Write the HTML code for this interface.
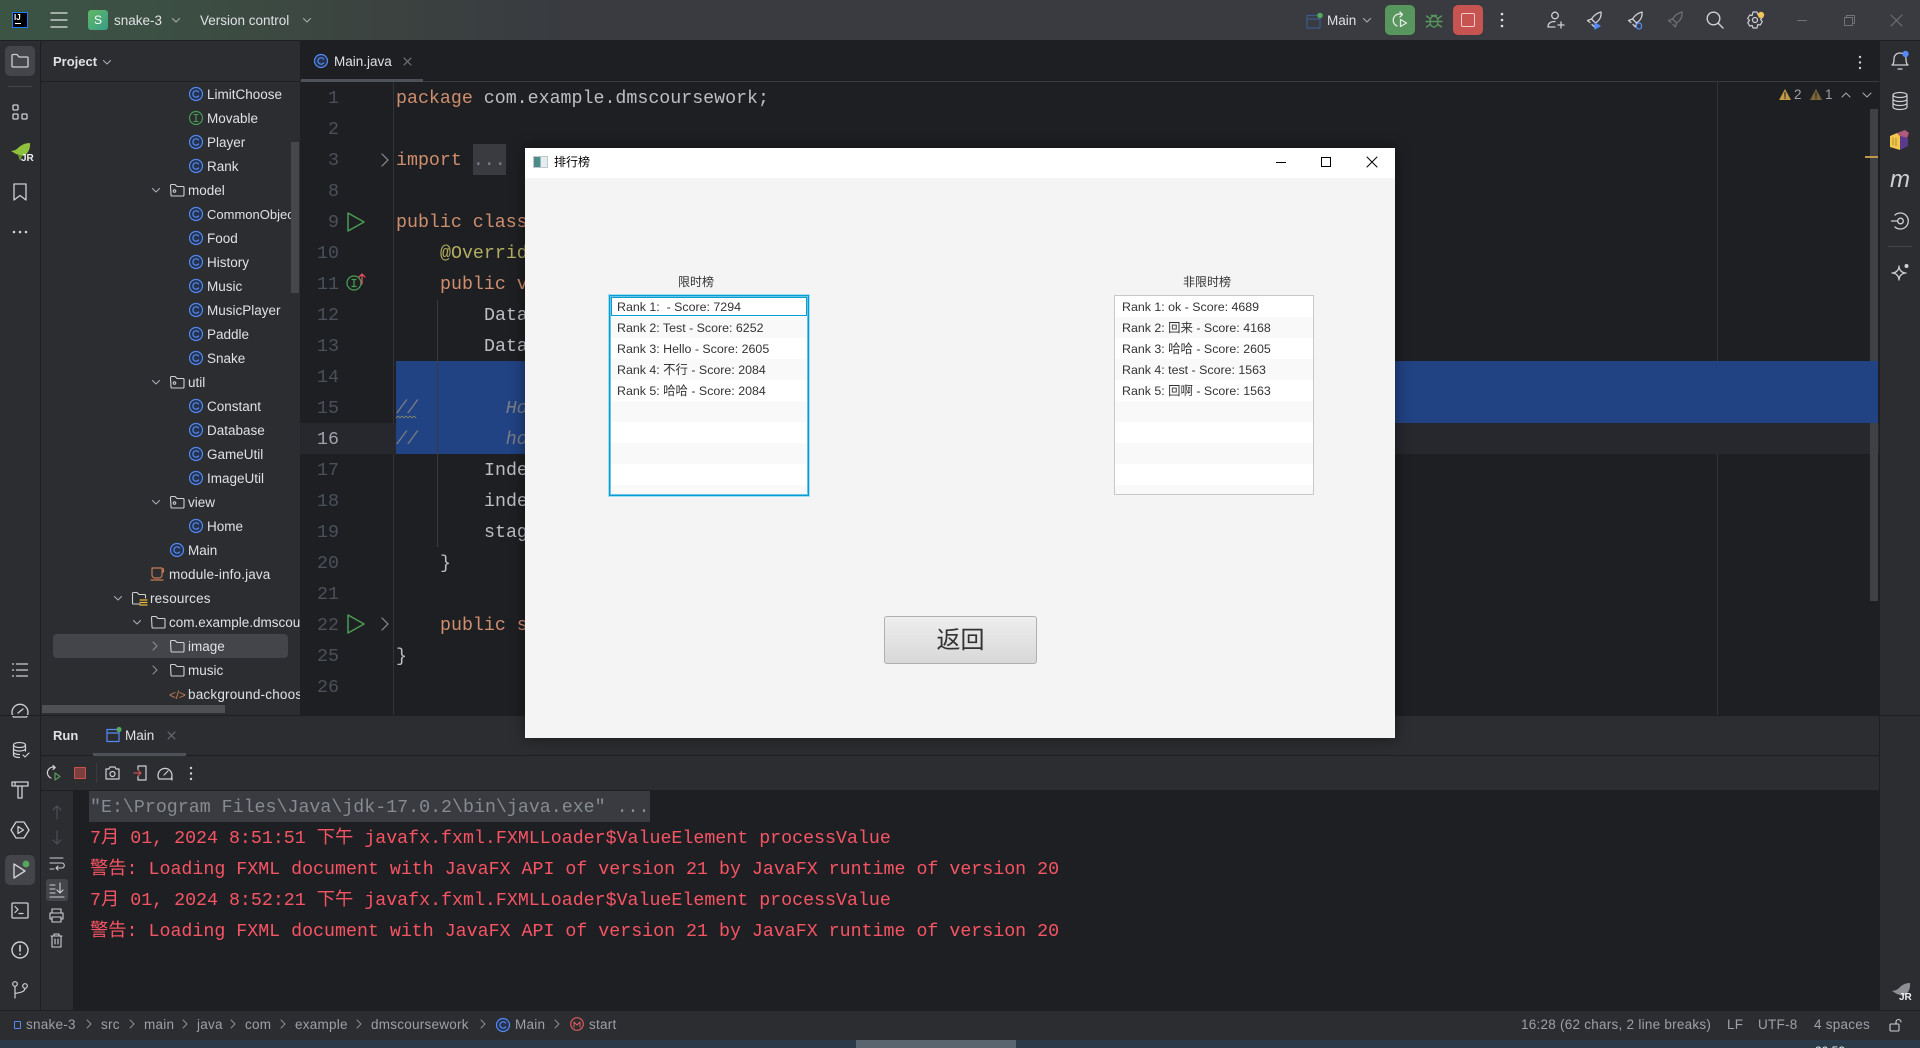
<!DOCTYPE html>
<html><head><meta charset="utf-8"><style>
html,body{margin:0;padding:0;background:#1e1f22;width:1920px;height:1048px;overflow:hidden}
body{position:relative;font-family:"Liberation Sans","Noto Sans CJK SC",sans-serif;font-size:13.5px;color:#dfe1e5}
.a{position:absolute}
.t{position:absolute;white-space:pre;line-height:24px;height:24px;padding-top:1px}
svg{position:absolute;overflow:visible;fill:none;stroke-linecap:round;stroke-linejoin:round}
.m{position:absolute;white-space:pre;font-family:"Liberation Mono","Noto Sans CJK SC",monospace;font-size:18.3px;line-height:31px;height:31px;margin-top:2px}
.n{position:absolute;left:300px;width:39px;text-align:right;font-family:"Liberation Mono",monospace;font-size:18.3px;line-height:31px;color:#4b5059;margin-top:2px}
.k{color:#cf8e6d}.w{color:#bcbec4}.g{color:#7a7e85}
.r{color:#f75464}.rl{position:absolute;left:90px;white-space:pre;font-family:"Liberation Mono","Noto Sans CJK SC",monospace;font-size:18.3px;line-height:31px;color:#f75464;margin-top:1px}
.d{position:absolute;white-space:pre;font-family:"Liberation Sans","Noto Sans CJK SC",sans-serif;font-size:12.4px;line-height:21px;color:#333;margin-top:1px}
.s{position:absolute;top:1012px;line-height:25px;white-space:pre;color:#9da0a8;font-size:13.5px;letter-spacing:.25px}
</style></head><body>
<svg width="0" height="0" style="position:absolute"><defs>
<symbol id="c" viewBox="0 0 16 16" overflow="visible"><circle cx="8" cy="8" r="6.5" stroke="#548af7" stroke-width="1.2" fill="#25324d"/><path d="M10.6 6A3.2 3.2 0 1 0 10.6 10" stroke="#548af7" stroke-width="1.2" fill="none"/></symbol>
<symbol id="f" viewBox="0 0 16 16" overflow="visible"><path d="M1.5 3.5a1 1 0 0 1 1-1h3.5l2 2h6a1 1 0 0 1 1 1v7.500a1 1 0 0 1-1 1h-11a1 1 0 0 1-1-1z" stroke="#ced0d6" stroke-width="1.1" fill="none"/></symbol>
<symbol id="fp" viewBox="0 0 16 16" overflow="visible"><path d="M1.500 3.500a1 1 0 0 1 1-1h3.500l2 2h6a1 1 0 0 1 1 1v7.500a1 1 0 0 1-1 1h-11a1 1 0 0 1-1-1z" stroke="#ced0d6" stroke-width="1.1" fill="none"/><circle cx="5.500" cy="9" r="1.300" stroke="#ced0d6"/></symbol>
<symbol id="dn" viewBox="0 0 10 10" overflow="visible"><path d="M1.500 3.500l3.500 3.500 3.500-3.500" stroke="#a8abb2" stroke-width="1.1" fill="none"/></symbol>
<symbol id="rt" viewBox="0 0 10 10" overflow="visible"><path d="M3 1l4 4-4 4" stroke="#8c8f96" stroke-width="1.1" fill="none"/></symbol>
<symbol id="rk" viewBox="0 0 20 20" overflow="visible"><path d="M17 2c.5 4-1 8-5.500 11L7.500 9C10 5 13 3 17 2zM7.500 9l-4 1.500L6 12.500M11.500 13l-1 4-2.500-2.500" stroke="#ced0d6" stroke-width="1.3" fill="none"/></symbol>
<symbol id="sep" viewBox="0 0 10 10" overflow="visible"><path d="M3 1l4 4-4 4" stroke="#8c8f96" stroke-width="1" fill="none"/></symbol>
</defs></svg>

<!-- title bar -->
<div class="a" style="left:0;top:0;width:1920px;height:40px;background:#393b40"></div>
<div class="a" style="left:0;top:0;width:560px;height:40px;background:linear-gradient(90deg,#3b5444 0,#3c4f44 30%,#3b423f 70%,#393b40 100%)"></div>
<div class="a" style="left:0;top:40px;width:1920px;height:1px;background:#1e1f22"></div>
<div class="a" style="left:12px;top:12px;width:14px;height:14px;background:#000;border:1px solid #1f7bff"></div>
<div class="a" style="left:14px;top:13px;color:#fff;font-size:8px;font-weight:bold;line-height:10px">IJ</div>
<div class="a" style="left:15px;top:23px;width:6px;height:1px;background:#fff"></div>
<svg style="left:51px;top:12px" width="16" height="16"><path d="M0 1h16M0 8h16M0 15h16" stroke="#dfe1e5" stroke-width="1.300"/></svg>
<div class="a" style="left:88px;top:10px;width:20px;height:20px;border-radius:3px;background:linear-gradient(135deg,#5fb863,#3a9c8a);color:#fff;font-size:12px;line-height:20px;text-align:center">S</div>
<div class="t" style="left:114px;top:8px">snake-3</div>
<svg style="left:171px;top:15px" width="10" height="10"><use href="#dn" width="10" height="10"/></svg>
<div class="t" style="left:200px;top:8px">Version control</div>
<svg style="left:302px;top:15px" width="10" height="10"><use href="#dn" width="10" height="10"/></svg>

<svg style="left:1306px;top:13px" width="16" height="16"><path d="M1 2.500h13v12.500h-13zM1 6h13" stroke="#3a5a8c" stroke-width="1.200"/><circle cx="14" cy="2.500" r="2.800" fill="#57a65e"/></svg>
<div class="t" style="left:1327px;top:8px">Main</div>
<svg style="left:1362px;top:15px" width="10" height="10"><use href="#dn" width="10" height="10"/></svg>
<div class="a" style="left:1385px;top:5px;width:30px;height:30px;border-radius:5px;background:#57965c"></div>
<svg style="left:1391px;top:11px" width="18" height="18"><path d="M11 3.500A6 6 0 1 0 6 15M9 1l2.500 2.500L9 6" stroke="#e6e6e6" stroke-width="1.300"/><path d="M9.500 8.500v7l6-3.500z" stroke="#e6e6e6" stroke-width="1.300"/></svg>
<svg style="left:1426px;top:12px" width="16" height="16"><ellipse cx="8" cy="9.500" rx="4" ry="5.500" stroke="#57965c" stroke-width="1.400"/><path d="M0.500 4l3.500 2.500M15.500 4l-3.500 2.500M0 9.500h4M16 9.500h-4M0.500 15l3.500-2.500M15.500 15l-3.500-2.500M5.500 3.500h5M4 9.500h8" stroke="#57965c" stroke-width="1.400"/></svg>
<div class="a" style="left:1453px;top:5px;width:30px;height:30px;border-radius:5px;background:#c75450"></div>
<div class="a" style="left:1461px;top:13px;width:12px;height:12px;border:1.500px solid #eeccc9;border-radius:2px"></div>
<svg style="left:1500px;top:12px" width="4" height="16"><circle cx="2" cy="2" r="1.300" fill="#dfe1e5"/><circle cx="2" cy="8" r="1.300" fill="#dfe1e5"/><circle cx="2" cy="14" r="1.300" fill="#dfe1e5"/></svg>
<svg style="left:1547px;top:11px" width="18" height="18"><circle cx="8" cy="4.500" r="3.300" stroke="#ced0d6" stroke-width="1.300"/><path d="M1 16c0-3.500 2.500-5.500 7-5.500M8 16H1M14 11v6M11 14h6" stroke="#ced0d6" stroke-width="1.300"/></svg>
<svg style="left:1584px;top:10px" width="20" height="20"><use href="#rk" width="20" height="20"/><path d="M11 13v6l5-3z" stroke="#548af7" stroke-width="1.300" fill="#548af7"/></svg>
<svg style="left:1625px;top:10px" width="20" height="20"><use href="#rk" width="20" height="20"/><rect x="11.500" y="13" width="5" height="6" rx="2.500" stroke="#548af7" stroke-width="1.300"/></svg>
<svg style="left:1665px;top:10px;opacity:.35" width="20" height="20"><use href="#rk" width="20" height="20"/></svg>
<svg style="left:1706px;top:11px" width="18" height="18"><circle cx="7.500" cy="7.500" r="6.300" stroke="#ced0d6" stroke-width="1.400"/><path d="M12 12l5 5" stroke="#ced0d6" stroke-width="1.400"/></svg>
<svg style="left:1746px;top:11px" width="18" height="18"><path d="M7 1h4l.8 2.500 2.500-.5 2 3.500-1.800 2 1.800 2-2 3.500-2.500-.5L11 17H7l-.8-2.500-2.500.5-2-3.500 1.800-2-1.800-2 2-3.500 2.500.5z" stroke="#ced0d6" stroke-width="1.200"/><circle cx="9" cy="9" r="2.500" stroke="#ced0d6" stroke-width="1.200"/><circle cx="15" cy="4" r="3.200" fill="#f2c55c"/></svg>
<div class="a" style="left:1797px;top:20px;width:10px;height:1px;background:#6f7278"></div>
<svg style="left:1844px;top:15px" width="11" height="11"><path d="M0.500 2.500h8v8h-8zM2.500 2.500V.5h8v8h-2" stroke="#6f7278"/></svg>
<svg style="left:1891px;top:15px" width="11" height="11"><path d="M0 0l11 11M11 0L0 11" stroke="#6f7278"/></svg>

<!-- left strip -->
<div class="a" style="left:0;top:41px;width:40px;height:969px;background:#2b2d30"></div>
<div class="a" style="left:40px;top:41px;width:1px;height:969px;background:#1e1f22"></div>
<div class="a" style="left:5px;top:46px;width:30px;height:30px;border-radius:5px;background:#43454a"></div>
<svg style="left:11px;top:53px" width="18" height="16"><path d="M1 2.500a1 1 0 0 1 1-1h4l2 2.500h8a1 1 0 0 1 1 1v8a1 1 0 0 1-1 1H2a1 1 0 0 1-1-1z" stroke="#ced0d6" stroke-width="1.300"/></svg>
<div class="a" style="left:8px;top:86px;width:24px;height:1px;background:#43454a"></div>
<svg style="left:12px;top:104px" width="16" height="16"><rect x="1" y="1" width="5" height="5" rx="1" stroke="#ced0d6" stroke-width="1.300"/><rect x="1" y="10" width="5" height="5" rx="1" stroke="#ced0d6" stroke-width="1.300"/><rect x="10" y="10" width="5" height="5" rx="1" stroke="#ced0d6" stroke-width="1.300"/></svg>
<svg style="left:10px;top:142px" width="22" height="22"><path d="M20 1c.5 6-2 11-7 13l-4-1-3-1-5-3c3-.5 5-1 7-3 3-3 7-5 12-5z" fill="#8fc03e"/><path d="M8 13l2 6 2-5z" fill="#6a9a2e"/></svg>
<div class="a" style="left:21px;top:153px;font-size:10px;font-weight:bold;color:#eee;line-height:12px">JR</div>
<svg style="left:13px;top:183px" width="14" height="18"><path d="M1 1h12v16l-6-4.500L1 17z" stroke="#ced0d6" stroke-width="1.300"/></svg>
<svg style="left:12px;top:230px" width="16" height="4"><circle cx="2" cy="2" r="1.300" fill="#ced0d6"/><circle cx="8" cy="2" r="1.300" fill="#ced0d6"/><circle cx="14" cy="2" r="1.300" fill="#ced0d6"/></svg>
<svg style="left:12px;top:663px" width="16" height="14"><path d="M4.500 1H15.500M4.500 7H15.500M4.500 13H15.500M0.500 1h1M0.500 7h1M0.500 13h1" stroke="#ced0d6" stroke-width="1.300"/></svg>
<svg style="left:11px;top:703px" width="18" height="15"><path d="M2.500 14a8 8 0 1 1 13 0zM7 10l5-4" stroke="#ced0d6" stroke-width="1.300"/></svg>
<svg style="left:12px;top:742px" width="18" height="17"><ellipse cx="7.500" cy="3" rx="6" ry="2.500" stroke="#ced0d6" stroke-width="1.200"/><path d="M1.500 3v10c0 1.400 2.500 2.500 6 2.500M13.500 3v6M1.500 6.500c0 1.400 2.500 2.500 6 2.500s6-1 6-2.500M1.500 10c0 1.400 2.500 2.500 6 2.500M11 13l2 2 4-4" stroke="#ced0d6" stroke-width="1.200"/></svg>
<svg style="left:11px;top:781px" width="18" height="18"><path d="M1 1h16v4H1zM7 5h4v12H7zM4 1v3" stroke="#ced0d6" stroke-width="1.300"/></svg>
<svg style="left:11px;top:821px" width="18" height="18"><path d="M5 1h8l5 8-5 8H5L0 9z" stroke="#ced0d6" stroke-width="1.300"/><path d="M7 5.500v7l5.500-3.500z" stroke="#ced0d6" stroke-width="1.300"/></svg>
<div class="a" style="left:5px;top:855px;width:30px;height:30px;border-radius:5px;background:#43454a"></div>
<svg style="left:13px;top:861px" width="18" height="18"><path d="M1 3v14l11-7z" stroke="#ced0d6" stroke-width="1.400"/><circle cx="13" cy="3" r="3.400" fill="#57a65e"/></svg>
<svg style="left:11px;top:902px" width="18" height="16"><rect x="1" y="1" width="16" height="15" rx="1" stroke="#ced0d6" stroke-width="1.300"/><path d="M4 4.500l3 3-3 3M8 11.500h4" stroke="#ced0d6" stroke-width="1.200"/></svg>
<svg style="left:11px;top:941px" width="18" height="18"><circle cx="9" cy="9" r="8" stroke="#ced0d6" stroke-width="1.400"/><path d="M9 4.500v5.500M9 13v.3" stroke="#ced0d6" stroke-width="1.600"/></svg>
<svg style="left:12px;top:981px" width="16" height="18"><circle cx="3" cy="3" r="2.300" stroke="#ced0d6" stroke-width="1.200"/><circle cx="13" cy="5" r="2.300" stroke="#ced0d6" stroke-width="1.200"/><path d="M3 5.500V17M13 7.500c0 3-4 4-10 5" stroke="#ced0d6" stroke-width="1.200"/></svg>

<!-- project panel -->
<div class="a" style="left:41px;top:41px;width:259px;height:674px;background:#2b2d30;overflow:hidden" id="pj">
<div class="a" style="left:0;top:40px;width:259px;height:1px;background:#1e1f22"></div>
<div class="a" style="left:12px;top:593px;width:235px;height:24px;border-radius:4px;background:#43454a"></div>
</div>
<div class="t" style="left:53px;top:49px;font-weight:bold;color:#dfe1e5;font-size:13px">Project</div>
<svg style="left:102px;top:57px" width="10" height="10"><use href="#dn" width="10" height="10"/></svg>
<div class="a" style="left:41px;top:82px;width:259px;height:633px;overflow:hidden">
<svg style="left:147px;top:4px" width="16" height="16"><use href="#c" width="16" height="16"/></svg><div class="t" style="left:166px;top:0">LimitChoose</div>
<svg style="left:147px;top:28px" width="16" height="16"><circle cx="8" cy="8" r="6.500" stroke="#499c54" stroke-width="1.200"/><path d="M6 4.500h4M6 11.500h4M8 4.500v7" stroke="#499c54" stroke-width="1.100"/></svg><div class="t" style="left:166px;top:24px">Movable</div>
<svg style="left:147px;top:52px" width="16" height="16"><use href="#c" width="16" height="16"/></svg><div class="t" style="left:166px;top:48px">Player</div>
<svg style="left:147px;top:76px" width="16" height="16"><use href="#c" width="16" height="16"/></svg><div class="t" style="left:166px;top:72px">Rank</div>
<svg style="left:110px;top:103px" width="10" height="10"><use href="#dn" width="10" height="10"/></svg><svg style="left:128px;top:100px" width="16" height="16"><use href="#fp" width="16" height="16"/></svg><div class="t" style="left:147px;top:96px">model</div>
<svg style="left:147px;top:124px" width="16" height="16"><use href="#c" width="16" height="16"/></svg><div class="t" style="left:166px;top:120px;font-size:13px">CommonObject</div>
<svg style="left:147px;top:148px" width="16" height="16"><use href="#c" width="16" height="16"/></svg><div class="t" style="left:166px;top:144px">Food</div>
<svg style="left:147px;top:172px" width="16" height="16"><use href="#c" width="16" height="16"/></svg><div class="t" style="left:166px;top:168px">History</div>
<svg style="left:147px;top:196px" width="16" height="16"><use href="#c" width="16" height="16"/></svg><div class="t" style="left:166px;top:192px">Music</div>
<svg style="left:147px;top:220px" width="16" height="16"><use href="#c" width="16" height="16"/></svg><div class="t" style="left:166px;top:216px">MusicPlayer</div>
<svg style="left:147px;top:244px" width="16" height="16"><use href="#c" width="16" height="16"/></svg><div class="t" style="left:166px;top:240px">Paddle</div>
<svg style="left:147px;top:268px" width="16" height="16"><use href="#c" width="16" height="16"/></svg><div class="t" style="left:166px;top:264px">Snake</div>
<svg style="left:110px;top:295px" width="10" height="10"><use href="#dn" width="10" height="10"/></svg><svg style="left:128px;top:292px" width="16" height="16"><use href="#fp" width="16" height="16"/></svg><div class="t" style="left:147px;top:288px">util</div>
<svg style="left:147px;top:316px" width="16" height="16"><use href="#c" width="16" height="16"/></svg><div class="t" style="left:166px;top:312px">Constant</div>
<svg style="left:147px;top:340px" width="16" height="16"><use href="#c" width="16" height="16"/></svg><div class="t" style="left:166px;top:336px">Database</div>
<svg style="left:147px;top:364px" width="16" height="16"><use href="#c" width="16" height="16"/></svg><div class="t" style="left:166px;top:360px">GameUtil</div>
<svg style="left:147px;top:388px" width="16" height="16"><use href="#c" width="16" height="16"/></svg><div class="t" style="left:166px;top:384px">ImageUtil</div>
<svg style="left:110px;top:415px" width="10" height="10"><use href="#dn" width="10" height="10"/></svg><svg style="left:128px;top:412px" width="16" height="16"><use href="#fp" width="16" height="16"/></svg><div class="t" style="left:147px;top:408px">view</div>
<svg style="left:147px;top:436px" width="16" height="16"><use href="#c" width="16" height="16"/></svg><div class="t" style="left:166px;top:432px">Home</div>
<svg style="left:128px;top:460px" width="16" height="16"><use href="#c" width="16" height="16"/></svg><div class="t" style="left:147px;top:456px">Main</div>
<svg style="left:109px;top:484px" width="16" height="16"><path d="M2 2h10v7a3 3 0 0 1-3 3H5a3 3 0 0 1-3-3zM12 3h1.500v3H12M1 14h12" stroke="#c77d55" stroke-width="1.200"/></svg><div class="t" style="left:128px;top:480px;letter-spacing:.15px">module-info.java</div>
<svg style="left:72px;top:511px" width="10" height="10"><use href="#dn" width="10" height="10"/></svg><svg style="left:90px;top:508px" width="16" height="16"><path d="M9 14H2.500a1 1 0 0 1-1-1V3.500a1 1 0 0 1 1-1H6l2 2h5.500a1 1 0 0 1 1 1V8" stroke="#ced0d6" stroke-width="1.100"/><path d="M9 10h7M9 12.500h7M9 15h7" stroke="#e8b53a" stroke-width="1.200"/></svg><div class="t" style="left:109px;top:504px;letter-spacing:.15px">resources</div>
<svg style="left:91px;top:535px" width="10" height="10"><use href="#dn" width="10" height="10"/></svg><svg style="left:109px;top:532px" width="16" height="16"><use href="#f" width="16" height="16"/></svg><div class="t" style="left:128px;top:528px">com.example.dmscoursework</div>
<svg style="left:109px;top:559px" width="10" height="10"><use href="#rt" width="10" height="10"/></svg><svg style="left:128px;top:556px" width="16" height="16"><use href="#f" width="16" height="16"/></svg><div class="t" style="left:147px;top:552px">image</div>
<svg style="left:109px;top:583px" width="10" height="10"><use href="#rt" width="10" height="10"/></svg><svg style="left:128px;top:580px" width="16" height="16"><use href="#f" width="16" height="16"/></svg><div class="t" style="left:147px;top:576px">music</div>
<div class="t" style="left:128px;top:600px;color:#c77d55;font-size:12px;letter-spacing:-.3px">&lt;/&gt;</div><div class="t" style="left:147px;top:600px;letter-spacing:.2px">background-choose.fxml</div>
<div class="a" style="left:1px;top:623px;width:183px;height:8px;background:#4e5054"></div>
</div>
<div class="a" style="left:291px;top:142px;width:8px;height:151px;background:#45474b"></div>

<!-- editor -->
<div class="a" style="left:300px;top:41px;width:1580px;height:40px;background:#1e1f22"></div>
<div class="a" style="left:300px;top:81px;width:1580px;height:1px;background:#393b40"></div>
<div class="a" style="left:301px;top:79px;width:122px;height:3px;background:#4e5157"></div>
<svg style="left:313px;top:53px" width="16" height="16"><use href="#c" width="16" height="16"/></svg>
<div class="t" style="left:334px;top:49px">Main.java</div>
<svg style="left:404px;top:58px" width="7" height="7"><path d="M0 0l7 7M7 0L0 7" stroke="#7a7e85"/></svg>
<svg style="left:1858px;top:55px" width="4" height="14"><circle cx="2" cy="2" r="1.200" fill="#ced0d6"/><circle cx="2" cy="7.500" r="1.200" fill="#ced0d6"/><circle cx="2" cy="13" r="1.200" fill="#ced0d6"/></svg>

<div class="a" style="left:393px;top:82px;width:1px;height:633px;background:#313438"></div>
<div class="a" style="left:1717px;top:82px;width:1px;height:633px;background:#313438"></div>
<div class="a" style="left:300px;top:423px;width:1580px;height:31px;background:#26282e"></div>
<div class="a" style="left:1870px;top:109px;width:8px;height:492px;background:#404145"></div>
<div class="a" style="left:396px;top:361px;width:1482px;height:62px;background:#214283"></div>
<div class="a" style="left:396px;top:423px;width:400px;height:31px;background:#214283"></div>
<div class="a" style="left:437px;top:300px;width:1px;height:247px;background:#393b40"></div>

<div class="n" style="top:82px">1</div><div class="n" style="top:113px">2</div><div class="n" style="top:144px">3</div><div class="n" style="top:175px">8</div><div class="n" style="top:206px">9</div><div class="n" style="top:237px">10</div><div class="n" style="top:268px">11</div><div class="n" style="top:299px">12</div><div class="n" style="top:330px">13</div><div class="n" style="top:361px">14</div><div class="n" style="top:392px">15</div><div class="n" style="top:423px;color:#a1a3ab">16</div><div class="n" style="top:454px">17</div><div class="n" style="top:485px">18</div><div class="n" style="top:516px">19</div><div class="n" style="top:547px">20</div><div class="n" style="top:578px">21</div><div class="n" style="top:609px">22</div><div class="n" style="top:640px">25</div><div class="n" style="top:671px">26</div>

<div class="a" style="left:473px;top:144px;width:33px;height:31px;background:#393b40"></div>
<div class="m" style="left:396px;top:82px"><span class="k">package</span><span class="w"> com.example.dmscoursework;</span></div>
<div class="m" style="left:396px;top:144px"><span class="k">import</span> <span class="g">...</span></div>
<div class="m" style="left:396px;top:206px"><span class="k">public class</span></div>
<div class="m" style="left:440px;top:237px;color:#b3ae60">@Override</div>
<div class="m" style="left:440px;top:268px"><span class="k">public void</span></div>
<div class="m w" style="left:484px;top:299px">Data</div>
<div class="m w" style="left:484px;top:330px">Data</div>
<div class="m g" style="left:396px;top:392px;font-style:italic">//        Ho</div>
<div class="m g" style="left:396px;top:423px;font-style:italic">//        ho</div>
<svg style="left:396px;top:416px" width="22" height="4"><path d="M0 2l2-2 2 2 2-2 2 2 2-2 2 2 2-2 2 2 2-2 2 2" stroke="#8a8f6a" stroke-width=".8"/></svg>
<div class="m w" style="left:484px;top:454px">Inde</div>
<div class="m w" style="left:484px;top:485px">inde</div>
<div class="m w" style="left:484px;top:516px">stag</div>
<div class="m w" style="left:440px;top:547px">}</div>
<div class="m" style="left:440px;top:609px"><span class="k">public s</span></div>
<div class="m w" style="left:396px;top:640px">}</div>

<svg style="left:381px;top:153px" width="8" height="14"><path d="M1 1l6 6-6 6" stroke="#8c8f96" stroke-width="1.200"/></svg>
<svg style="left:381px;top:617px" width="8" height="14"><path d="M1 1l6 6-6 6" stroke="#8c8f96" stroke-width="1.200"/></svg>
<svg style="left:347px;top:212px" width="18" height="19"><path d="M1 1v18l16-9z" stroke="#499c54" stroke-width="1.500"/></svg>
<svg style="left:347px;top:614px" width="18" height="19"><path d="M1 1v18l16-9z" stroke="#499c54" stroke-width="1.500"/></svg>
<svg style="left:346px;top:275px" width="16" height="16"><circle cx="8" cy="8" r="7" stroke="#499c54" stroke-width="1.300"/><path d="M6 4.500h4M6 11.500h4M8 4.500v7" stroke="#499c54" stroke-width="1.200"/></svg>
<svg style="left:358px;top:273px" width="8" height="12"><path d="M4 11V1M1 4l3-3 3 3" stroke="#f75464" stroke-width="1.200"/></svg>

<!-- warnings -->
<svg style="left:1779px;top:89px" width="12" height="11"><path d="M6 0l6 11H0z" fill="#c49a45"/><path d="M6 3.500v4M6 9v.5" stroke="#2b2d30" stroke-width="1.200"/></svg>
<div class="t" style="left:1794px;top:82px;color:#9da0a8">2</div>
<svg style="left:1810px;top:89px" width="12" height="11"><path d="M6 0l6 11H0z" fill="#7c6537"/><path d="M6 3.500v4M6 9v.5" stroke="#2b2d30" stroke-width="1.200"/></svg>
<div class="t" style="left:1825px;top:82px;color:#9da0a8">1</div>
<svg style="left:1842px;top:92px" width="8" height="5"><path d="M0 5l4-4 4 4" stroke="#a8abb2"/></svg>
<svg style="left:1863px;top:92px" width="8" height="5"><path d="M0 1l4 4 4-4" stroke="#a8abb2"/></svg>
<div class="a" style="left:1865px;top:156px;width:13px;height:2px;background:#bd9a4b"></div>

<!-- right strip -->
<div class="a" style="left:1879px;top:41px;width:1px;height:969px;background:#1e1f22"></div>
<div class="a" style="left:1880px;top:41px;width:40px;height:969px;background:#2b2d30"></div>
<svg style="left:1891px;top:51px" width="18" height="20"><path d="M1 14c2-1 2-4 2-6 0-3.500 2.500-6 6-6s6 2.500 6 6c0 2 0 5 2 6zM7 18h4" stroke="#ced0d6" stroke-width="1.300"/><circle cx="14.500" cy="3" r="3.200" fill="#548af7"/></svg>
<svg style="left:1892px;top:92px" width="16" height="18"><ellipse cx="8" cy="3" rx="7" ry="2.500" stroke="#ced0d6" stroke-width="1.200"/><path d="M1 3v12c0 1.400 3 2.500 7 2.500s7-1 7-2.500V3M1 7c0 1.400 3 2.500 7 2.500s7-1 7-2.500M1 11c0 1.400 3 2.500 7 2.500s7-1 7-2.500" stroke="#ced0d6" stroke-width="1.200"/></svg>
<svg style="left:1890px;top:130px" width="20" height="20"><path d="M0 6l7-3 3 3v14l-10-3z" fill="#f2c94c"/><path d="M7 3l8-3 4 3-2 5-7-2z" fill="#b05a7a"/><path d="M10 6l8 2v8l-8 4z" fill="#5b3a8c"/><path d="M3 8v7M6 8v8" stroke="#b08a30"/></svg>
<div class="a" style="left:1890px;top:168px;width:20px;text-align:center;font:italic 24px/24px 'Liberation Sans',sans-serif;color:#ced0d6">m</div>
<svg style="left:1891px;top:212px" width="18" height="18"><circle cx="9.500" cy="9" r="2.800" stroke="#ced0d6" stroke-width="1.300"/><path d="M0.500 9h6M4 3a8 8 0 1 1 0 12" stroke="#ced0d6" stroke-width="1.300"/></svg>
<div class="a" style="left:1888px;top:246px;width:24px;height:1px;background:#43454a"></div>
<svg style="left:1891px;top:263px" width="20" height="20"><path d="M8 3c0 4 3 7 7 7-4 0-7 3-7 7 0-4-3-7-7-7 4 0 7-3 7-7z" stroke="#ced0d6" stroke-width="1.300"/><circle cx="15.500" cy="3" r="2" fill="#ced0d6"/></svg>
<svg style="left:1891px;top:982px" width="20" height="20"><path d="M19 1c.5 6-2 11-7 13l-3-1-3-1-5-3c3-.5 5-1 7-3 3-3 6-5 11-5z" fill="#8d8f94"/></svg>
<div class="a" style="left:1899px;top:992px;font-size:10px;font-weight:bold;color:#eee;line-height:12px">JR</div>

<!-- run panel -->
<div class="a" style="left:41px;top:715px;width:1838px;height:295px;background:#1e1f22"></div>
<div class="a" style="left:41px;top:715px;width:1838px;height:75px;background:#2b2d30"></div>
<div class="a" style="left:41px;top:790px;width:32px;height:220px;background:#2b2d30"></div>
<div class="a" style="left:0;top:715px;width:1920px;height:1px;background:#1e1f22"></div>
<div class="a" style="left:41px;top:755px;width:1838px;height:1px;background:#1e1f22"></div>
<div class="a" style="left:41px;top:790px;width:1838px;height:1px;background:#1e1f22"></div>
<div class="a" style="left:93px;top:753px;width:93px;height:3px;background:#4e5157"></div>
<div class="t" style="left:53px;top:723px;font-weight:bold;font-size:13px">Run</div>
<svg style="left:106px;top:727px" width="16" height="16"><path d="M1 2.500h12v12H1zM1 6h12" stroke="#548af7" stroke-width="1.200"/><circle cx="13" cy="2.500" r="2.600" fill="#57a65e"/></svg>
<div class="t" style="left:125px;top:723px">Main</div>
<svg style="left:168px;top:732px" width="7" height="7"><path d="M0 0l7 7M7 0L0 7" stroke="#6f7278"/></svg>
<svg style="left:46px;top:765px" width="16" height="16"><path d="M9 2.500A5.500 5.500 0 1 0 5 13M7 0.500l2.200 2L7 4.500" stroke="#ced0d6" stroke-width="1.200"/><path d="M9 8v7l5-3.500z" stroke="#57965c" stroke-width="1.300"/></svg>
<div class="a" style="left:74px;top:767px;width:12px;height:12px;background:#7d3f3e;border:1px solid #c75450;border-radius:1px;box-sizing:border-box"></div>
<div class="a" style="left:96px;top:763px;width:1px;height:20px;background:#393b40"></div>
<svg style="left:105px;top:766px" width="15" height="14"><path d="M1 3h3l1-2h5l1 2h3v10H1z" stroke="#ced0d6" stroke-width="1.200"/><circle cx="7.500" cy="8" r="2.500" stroke="#ced0d6" stroke-width="1.200"/></svg>
<svg style="left:133px;top:765px" width="15" height="16"><path d="M5 1h8v14H5V11M5 5V1" stroke="#ced0d6" stroke-width="1.200"/><path d="M1 8h7M5 5l3 3-3 3" stroke="#c75450" stroke-width="1.200"/></svg>
<svg style="left:157px;top:766px" width="17" height="15"><path d="M2 13a7 7 0 1 1 12 0zM7 9l4-4M15 12v2" stroke="#ced0d6" stroke-width="1.200"/></svg>
<svg style="left:189px;top:766px" width="4" height="14"><circle cx="2" cy="2" r="1.200" fill="#ced0d6"/><circle cx="2" cy="7.500" r="1.200" fill="#ced0d6"/><circle cx="2" cy="13" r="1.200" fill="#ced0d6"/></svg>

<svg style="left:52px;top:805px" width="10" height="14"><path d="M5 14V1M1 5l4-4 4 4" stroke="#4b5059" stroke-width="1.200"/></svg>
<svg style="left:52px;top:831px" width="10" height="14"><path d="M5 0v13M1 9l4 4 4-4" stroke="#4b5059" stroke-width="1.200"/></svg>
<svg style="left:49px;top:857px" width="16" height="14"><path d="M1 1h13M1 6h12c3 0 3 5 0 5H8M1 12h4M9 9l-2 2 2 2" stroke="#ced0d6" stroke-width="1.100"/></svg>
<div class="a" style="left:46px;top:879px;width:22px;height:22px;border-radius:3px;background:#43454a"></div>
<svg style="left:49px;top:882px" width="16" height="16"><path d="M1 3h5M1 7h5M1 11h5M1 15h14M11 1v10M8 8l3 3 3-3" stroke="#ced0d6" stroke-width="1.100"/></svg>
<svg style="left:49px;top:908px" width="15" height="15"><path d="M3 5V1h9v4M3 11H1V5h13v6h-2M3 9h9v5H3z" stroke="#ced0d6" stroke-width="1.100"/></svg>
<svg style="left:50px;top:933px" width="13" height="15"><path d="M1 3h11M4 3V1h5v2M2 3v11h9V3M5 6v5M8 6v5" stroke="#ced0d6" stroke-width="1.100"/></svg>

<div class="a" style="left:89px;top:791px;width:561px;height:31px;background:#393b40"></div>
<div class="rl" style="top:792px;color:#868a91">"E:\Program Files\Java\jdk-17.0.2\bin\java.exe" ...</div>
<div class="rl" style="top:823px">7月 01, 2024 8:51:51 下午 javafx.fxml.FXMLLoader$ValueElement processValue</div>
<div class="rl" style="top:854px">警告: Loading FXML document with JavaFX API of version 21 by JavaFX runtime of version 20</div>
<div class="rl" style="top:885px">7月 01, 2024 8:52:21 下午 javafx.fxml.FXMLLoader$ValueElement processValue</div>
<div class="rl" style="top:916px">警告: Loading FXML document with JavaFX API of version 21 by JavaFX runtime of version 20</div>

<!-- status bar -->
<div class="a" style="left:0;top:1010px;width:1920px;height:30px;background:#2b2d30;border-top:1px solid #1e1f22;box-sizing:border-box"></div>
<div class="a" style="left:14px;top:1021px;width:7px;height:8px;border:1px solid #548af7;border-radius:1px;box-sizing:border-box"></div>
<div class="s" style="left:26px">snake-3</div><div class="s" style="left:101px">src</div><div class="s" style="left:144px">main</div><div class="s" style="left:197px">java</div><div class="s" style="left:245px">com</div><div class="s" style="left:295px">example</div><div class="s" style="left:371px">dmscoursework</div><div class="s" style="left:515px">Main</div><div class="s" style="left:589px">start</div>
<svg style="left:84px;top:1019px" width="10" height="10"><use href="#sep" width="10" height="10"/></svg>
<svg style="left:127px;top:1019px" width="10" height="10"><use href="#sep" width="10" height="10"/></svg>
<svg style="left:180px;top:1019px" width="10" height="10"><use href="#sep" width="10" height="10"/></svg>
<svg style="left:228px;top:1019px" width="10" height="10"><use href="#sep" width="10" height="10"/></svg>
<svg style="left:278px;top:1019px" width="10" height="10"><use href="#sep" width="10" height="10"/></svg>
<svg style="left:354px;top:1019px" width="10" height="10"><use href="#sep" width="10" height="10"/></svg>
<svg style="left:478px;top:1019px" width="10" height="10"><use href="#sep" width="10" height="10"/></svg>
<svg style="left:552px;top:1019px" width="10" height="10"><use href="#sep" width="10" height="10"/></svg>
<svg style="left:495px;top:1017px" width="16" height="16"><use href="#c" width="16" height="16"/></svg>
<svg style="left:570px;top:1017px" width="14" height="14"><circle cx="7" cy="7" r="6.300" stroke="#db5c5c" stroke-width="1.200"/><path d="M4 10V5l3 3 3-3v5" stroke="#db5c5c" stroke-width="1.100"/></svg>
<div class="s" style="left:1521px">16:28 (62 chars, 2 line breaks)</div><div class="s" style="left:1727px">LF</div><div class="s" style="left:1758px">UTF-8</div><div class="s" style="left:1814px">4 spaces</div>
<svg style="left:1889px;top:1019px" width="14" height="13"><rect x="1" y="5" width="9" height="7" rx="1" stroke="#ced0d6" stroke-width="1.100"/><path d="M7 5V3a2.500 2.500 0 0 1 5 0" stroke="#ced0d6" stroke-width="1.100"/></svg>

<!-- taskbar -->
<div class="a" style="left:0;top:1040px;width:1920px;height:8px;background:#2a3a48"></div>
<div class="a" style="left:856px;top:1040px;width:160px;height:8px;background:#5a6570"></div>
<div class="a" style="left:1815px;top:1044px;width:32px;height:4px;overflow:hidden;color:#eee;font-size:12px;line-height:14px">20:52</div>

<!-- dialog -->
<div class="a" style="left:525px;top:148px;width:870px;height:590px;background:#f4f4f4;box-shadow:0 0 14px rgba(0,0,0,.45)"></div>
<div class="a" style="left:525px;top:148px;width:870px;height:30px;background:#fff"></div>
<div class="a" style="left:533px;top:156px;width:15px;height:12px;background:linear-gradient(90deg,#4d8a8a 0 50%,#e3ecef 50%);border:1px solid #c3c8cc;box-sizing:border-box"></div>
<div class="a" style="left:554px;top:155px;font-size:12px;line-height:15px;color:#000;white-space:pre">排行榜</div>
<div class="a" style="left:1276px;top:162px;width:10px;height:1px;background:#000"></div>
<div class="a" style="left:1321px;top:157px;width:10px;height:10px;border:1px solid #000;box-sizing:border-box"></div>
<svg style="left:1367px;top:157px" width="10" height="10"><path d="M0 0l10 10M10 0L0 10" stroke="#000" stroke-width="1"/></svg>
<div class="d" style="left:678px;top:271px;font-size:12px">限时榜</div>
<div class="d" style="left:1183px;top:271px;font-size:12px">非限时榜</div>

<div class="a" style="left:609px;top:295px;width:200px;height:201px;background:#fff;border:1px solid #039ed3;box-sizing:border-box;box-shadow:0 0 0 1px #a6dcf0,inset 0 0 0 1px #6cc4e4"></div>
<div class="a" style="left:611px;top:317px;width:196px;height:21px;background:#f9f9f9"></div>
<div class="a" style="left:611px;top:359px;width:196px;height:21px;background:#f9f9f9"></div>
<div class="a" style="left:611px;top:401px;width:196px;height:21px;background:#f9f9f9"></div>
<div class="a" style="left:611px;top:443px;width:196px;height:21px;background:#f9f9f9"></div>
<div class="a" style="left:611px;top:485px;width:196px;height:9px;background:#f9f9f9"></div>
<div class="a" style="left:611px;top:297px;width:196px;height:19px;border:1px solid #039ed3;box-sizing:border-box"></div>
<div class="d" style="left:617px;top:296px">Rank 1:  - Score: 7294</div>
<div class="d" style="left:617px;top:317px">Rank 2: Test - Score: 6252</div>
<div class="d" style="left:617px;top:338px">Rank 3: Hello - Score: 2605</div>
<div class="d" style="left:617px;top:359px">Rank 4: 不行 - Score: 2084</div>
<div class="d" style="left:617px;top:380px">Rank 5: 哈哈 - Score: 2084</div>

<div class="a" style="left:1114px;top:295px;width:200px;height:200px;background:#fff;border:1px solid #c8c8c8;box-sizing:border-box"></div>
<div class="a" style="left:1115px;top:317px;width:198px;height:21px;background:#f9f9f9"></div>
<div class="a" style="left:1115px;top:359px;width:198px;height:21px;background:#f9f9f9"></div>
<div class="a" style="left:1115px;top:401px;width:198px;height:21px;background:#f9f9f9"></div>
<div class="a" style="left:1115px;top:443px;width:198px;height:21px;background:#f9f9f9"></div>
<div class="a" style="left:1115px;top:485px;width:198px;height:9px;background:#f9f9f9"></div>
<div class="d" style="left:1122px;top:296px">Rank 1: ok - Score: 4689</div>
<div class="d" style="left:1122px;top:317px">Rank 2: 回来 - Score: 4168</div>
<div class="d" style="left:1122px;top:338px">Rank 3: 哈哈 - Score: 2605</div>
<div class="d" style="left:1122px;top:359px">Rank 4: test - Score: 1563</div>
<div class="d" style="left:1122px;top:380px">Rank 5: 回啊 - Score: 1563</div>

<div class="a" style="left:884px;top:616px;width:153px;height:48px;box-sizing:border-box;border:1px solid #b0b0b0;border-radius:3px;background:linear-gradient(#eeeeee,#d8d8d8);text-align:center;font-size:24px;line-height:48px;color:#333">返回</div>
</body></html>
